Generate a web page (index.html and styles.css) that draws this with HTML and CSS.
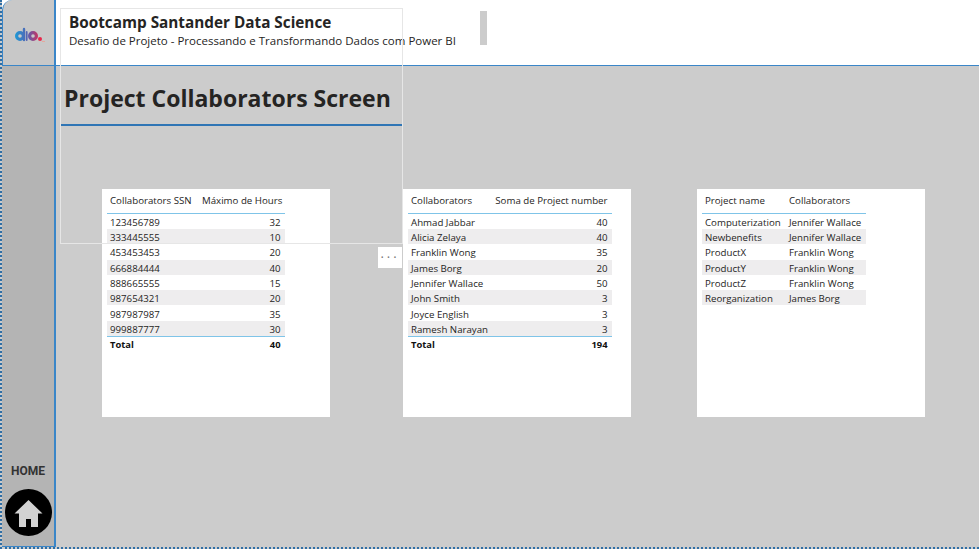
FILE: index.html
```html
<html>
    <head>
        <title>Project Collaborators Screen</title>
        <link rel="stylesheet" href="styles.css">
    </head>
    <body>
        <div class="report">
            <div class="top">
                <div class="logo-cell">
                    <svg class="logo" width="32" height="16" viewBox="0 0 32 16">
                        <defs>
                            <linearGradient id="dio-grad" gradientUnits="userSpaceOnUse" x1="0" x2="26" y1="0" y2="0">
                                <stop offset="0" stop-color="#1c9ad6"/>
                                <stop offset="0.5" stop-color="#5a5fb0"/>
                                <stop offset="1" stop-color="#e8274b"/>
                            </linearGradient>
                        </defs>
                        <g fill="none" stroke="url(#dio-grad)" stroke-linecap="round">
                            <circle cx="5" cy="9" r="3.4" stroke-width="3.2"/>
                            <path d="M9 2V13" stroke-width="2.4"/>
                            <path d="M11.7 5V13" stroke-width="1.8"/>
                            <circle cx="18" cy="9" r="3.4" stroke-width="3.2"/>
                        </g>
                        <circle cx="25" cy="12" r="2" fill="#e8274b"/>
                        <path d="M27 14.5h3" stroke="#e8a79b" stroke-width="1"/>
                    </svg>
                </div>
                <div class="banner">
                    <div class="banner-text">
                        <div class="banner-title">Bootcamp Santander Data Science</div>
                        <div class="banner-sub">Desafio de Projeto - Processando e Transformando Dados com Power BI</div>
                    </div>
                    <div class="banner-bar"></div>
                </div>
            </div>
            <div class="middle">
                <div class="rail">
                    <div class="home-label">HOME</div>
                    <svg class="home-btn" width="47" height="47" viewBox="0 0 47 47">
                        <circle cx="23.5" cy="23.5" r="23.5" fill="#000"/>
                        <path d="M23.5 11L37.5 24.5H33V38H26V30H21V38H14V24.5H9.5Z" fill="#d2d2d2"/>
                    </svg>
                </div>
                <div class="canvas">
                    <h1 class="page-title">Project Collaborators Screen</h1>
                    <div class="cards">
                        <div class="card card-ssn">
                            <table class="grid">
                                <thead>
                                    <tr><th class="col-ssn">Collaborators SSN</th><th class="num">Máximo de Hours</th></tr>
                                </thead>
                                <tbody>
                                    <tr><td>123456789</td><td class="num">32</td></tr>
                                    <tr><td>333445555</td><td class="num">10</td></tr>
                                    <tr><td>453453453</td><td class="num">20</td></tr>
                                    <tr><td>666884444</td><td class="num">40</td></tr>
                                    <tr><td>888665555</td><td class="num">15</td></tr>
                                    <tr><td>987654321</td><td class="num">20</td></tr>
                                    <tr><td>987987987</td><td class="num">35</td></tr>
                                    <tr><td>999887777</td><td class="num">30</td></tr>
                                </tbody>
                                <tfoot>
                                    <tr><td>Total</td><td class="num">40</td></tr>
                                </tfoot>
                            </table>
                        </div>
                        <div class="card card-sum">
                            <table class="grid">
                                <thead>
                                    <tr><th class="col-name">Collaborators</th><th class="num">Soma de Project number</th></tr>
                                </thead>
                                <tbody>
                                    <tr><td>Ahmad Jabbar</td><td class="num">40</td></tr>
                                    <tr><td>Alicia Zelaya</td><td class="num">40</td></tr>
                                    <tr><td>Franklin Wong</td><td class="num">35</td></tr>
                                    <tr><td>James Borg</td><td class="num">20</td></tr>
                                    <tr><td>Jennifer Wallace</td><td class="num">50</td></tr>
                                    <tr><td>John Smith</td><td class="num">3</td></tr>
                                    <tr><td>Joyce English</td><td class="num">3</td></tr>
                                    <tr><td>Ramesh Narayan</td><td class="num">3</td></tr>
                                </tbody>
                                <tfoot>
                                    <tr><td>Total</td><td class="num">194</td></tr>
                                </tfoot>
                            </table>
                        </div>
                        <div class="card card-proj">
                            <table class="grid">
                                <thead>
                                    <tr><th class="col-proj">Project name</th><th>Collaborators</th></tr>
                                </thead>
                                <tbody>
                                    <tr><td>Computerization</td><td>Jennifer Wallace</td></tr>
                                    <tr><td>Newbenefits</td><td>Jennifer Wallace</td></tr>
                                    <tr><td>ProductX</td><td>Franklin Wong</td></tr>
                                    <tr><td>ProductY</td><td>Franklin Wong</td></tr>
                                    <tr><td>ProductZ</td><td>Franklin Wong</td></tr>
                                    <tr><td>Reorganization</td><td>James Borg</td></tr>
                                </tbody>
                            </table>
                        </div>
                    </div>
                </div>
            </div>
            <!-- focus frame and menu sit on top of the report -->
            <div class="focus-frame"></div>
            <div class="more-btn">...</div>
        </div>
    </body>
</html>
```

FILE: styles.css
```css
html, body {
    margin: 0;
    padding: 0;
}
body {
    color: #252423;
    font-family: "Open Sans", sans-serif;
    background: #ccc;
}
.report {
    position: relative;
    width: 979px;
    height: 549px;
    display: flex;
    flex-direction: column;
    overflow: hidden;
    box-sizing: border-box;
    border-left: 2px dotted #2f6ea5;
    border-bottom: 2px dotted #2f6ea5;
    background: #ccc;
}
.top {
    display: flex;
    height: 66px;
    flex: none;
    background: #fff;
}
.logo-cell {
    width: 54px;
    flex: none;
    box-sizing: border-box;
    border-left: 1px solid #3a86c8;
    border-right: 2px solid #3a86c8;
    border-bottom: 1px solid #3a86c8;
    border-top-left-radius: 10px;
    background: #c8c8c8;
    padding: 27px 0 0 12px;
}
.logo {
    display: block;
}
.banner {
    flex: 1;
    display: flex;
    box-sizing: border-box;
    background: #fff;
    border-bottom: 1px solid #3a86c8;
    padding-left: 13px;
}
.banner-text {
    width: 411px;
    flex: none;
    padding-top: 12px;
}
.banner-title {
    font-size: 15.3px;
    font-weight: 700;
    line-height: 20px;
}
.banner-sub {
    font-size: 11.5px;
    line-height: 17px;
    white-space: nowrap;
}
.banner-bar {
    width: 7px;
    height: 34px;
    margin-top: 11px;
    background: #ccc;
}
.middle {
    flex: 1;
    display: flex;
    min-height: 0;
}
.rail {
    width: 54px;
    flex: none;
    box-sizing: border-box;
    background: #b4b4b4;
    border-right: 2px solid #3a86c8;
    border-bottom: 1px solid #3a86c8;
    display: flex;
    flex-direction: column;
    align-items: center;
    justify-content: flex-end;
    padding-bottom: 10px;
}
.home-label {
    font-family: "Roboto", sans-serif;
    font-weight: 700;
    font-size: 12px;
    line-height: 14px;
    color: #333;
    margin-bottom: 11px;
}
.home-btn {
    display: block;
}
.canvas {
    flex: 1;
    min-width: 0;
}
.page-title {
    width: 342px;
    box-sizing: border-box;
    margin: 0 0 0 5px;
    height: 60px;
    padding: 13px 0 0 3px;
    font-size: 23px;
    line-height: 38px;
    font-weight: 700;
    white-space: nowrap;
    border-bottom: 2px solid #2f75b5;
}
.cards {
    display: flex;
    margin: 63px 0 0 46px;
}
.card {
    width: 228px;
    height: 228px;
    background: #fff;
    box-sizing: border-box;
    padding: 5px;
    flex: none;
}
.card-sum {
    margin-left: 73px;
}
.card-proj {
    margin-left: 66px;
}
.grid {
    border-collapse: collapse;
    table-layout: fixed;
    font-size: 9.7px;
    color: #252423;
}
.card-ssn .grid {
    width: 178px;
}
.card-sum .grid {
    width: 204px;
}
.card-proj .grid {
    width: 164px;
}
.col-ssn {
    width: 92px;
}
.col-name {
    width: 78px;
}
.grid th {
    box-sizing: border-box;
    height: 19px;
    padding: 0 3px 6px 3px;
    font-weight: 400;
    text-align: left;
    white-space: nowrap;
    border-bottom: 1px solid #7fc4e8;
}
.card-proj .col-proj {
    width: 84px;
}
.grid td {
    box-sizing: border-box;
    height: 15.3px;
    padding: 3px 3px 0 3px;
    line-height: 12px;
    white-space: nowrap;
}
.grid tbody tr:nth-child(even) td {
    background: #eeedee;
}
.grid .num {
    text-align: right;
    padding-right: 4.5px;
}
.grid tfoot td {
    padding-top: 2px;
    font-size: 9.4px;
    font-weight: 700;
    color: #111;
    border-top: 1px solid #7fc4e8;
}
.focus-frame {
    position: absolute;
    left: 58px;
    top: 8px;
    width: 343px;
    height: 236px;
    box-sizing: border-box;
    border: 1px solid #e6e6e6;
    pointer-events: none;
}
.more-btn {
    position: absolute;
    left: 376px;
    top: 247px;
    width: 24px;
    height: 21px;
    background: #fff;
    color: #777;
    font-size: 13px;
    line-height: 12px;
    text-align: center;
    letter-spacing: 3px;
}
```
